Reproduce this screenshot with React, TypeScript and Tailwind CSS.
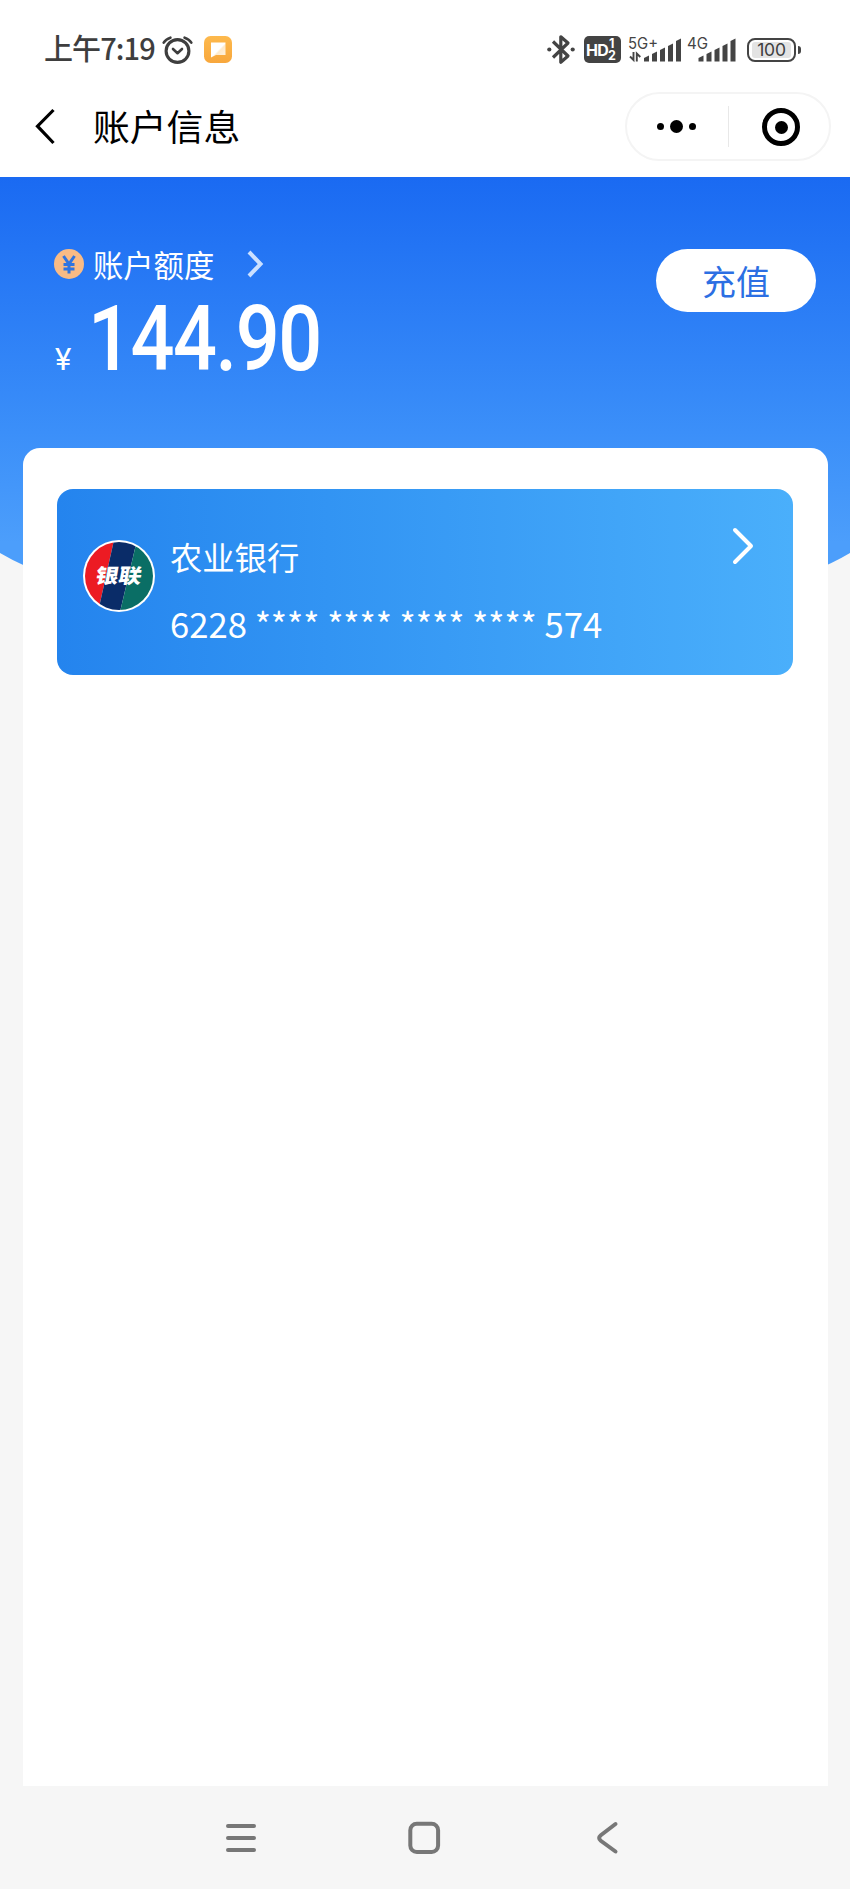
const signalBars = [
  { x: 0, h: 6 },
  { x: 8, h: 10 },
  { x: 16, h: 14 },
  { x: 24, h: 18 },
  { x: 32, h: 23 },
]

function Bars({ x }: { x: number }) {
  return (
    <g transform={`translate(${x} 0)`}>
      {signalBars.map((bar) => (
        <path
          key={bar.x}
          d={`M${bar.x} 25.5 V${28 - bar.h} L${bar.x + 5} ${25.5 - bar.h} V25.5 Z`}
          fill="#444"
        />
      ))}
    </g>
  )
}

function StatusBar() {
  return (
    <div className="flex h-[76px] items-center justify-between pt-[23px] pl-[44px] pr-[49px] text-[#3e3e3e]">
      <div className="flex items-center">
        <span className="w-[113px] whitespace-nowrap text-[29px] leading-none font-medium tracking-[-0.9px] -mt-1">
          上午7:19
        </span>
        {/* Alarm */}
        <svg className="ml-[5px]" width="31" height="28" viewBox="0 0 31 28" fill="none" stroke="#3e3e3e" strokeLinecap="round">
          <circle cx="15.5" cy="15" r="11.4" strokeWidth="3.1" />
          <path d="M11 13l4.5 4.2 4.5-4.2" strokeWidth="2.6" strokeLinejoin="round" />
          <path d="M1.7 6.6Q3.8 3.1 8.4 1.7M29.3 6.6Q27.2 3.1 22.6 1.7" strokeWidth="2.6" />
        </svg>
        {/* App notification */}
        <svg className="ml-[11px]" width="28" height="27" viewBox="0 0 28 27">
          <defs>
            <linearGradient id="note" x1="0" y1="0" x2="0" y2="1">
              <stop offset="0" stopColor="#fdb94d" />
              <stop offset="1" stopColor="#f8a73c" />
            </linearGradient>
            <linearGradient id="bubble" x1="0" y1="0" x2="1" y2="1">
              <stop offset="0.5" stopColor="#fff" />
              <stop offset="0.58" stopColor="#feeacb" />
              <stop offset="1" stopColor="#fff3e2" />
            </linearGradient>
          </defs>
          <rect width="28" height="27" rx="6.5" fill="url(#note)" />
          <path d="M7 6.500h14.500v12.500h-9.500l-5 2.500z" fill="url(#bubble)" />
        </svg>
      </div>

      <div className="flex items-center">
        {/* Bluetooth */}
        <svg width="28" height="31" viewBox="0 0 28 31" fill="none" stroke="#444" strokeWidth="3.2">
          <path d="M6 7.500l15 14.500-7.200 6.200V2.800l7.200 6.200-15 14.500" strokeLinejoin="round" />
          <circle cx="2.300" cy="15.500" r="2.100" fill="#444" stroke="none" />
          <circle cx="25.700" cy="15.500" r="2.100" fill="#444" stroke="none" />
        </svg>
        <div className="ml-[9px] flex h-[27px] w-[37px] items-center rounded-[5px] bg-[#434343] pl-[2px] font-['Inter','Noto_Sans_CJK_SC',sans-serif] font-bold text-white">
          <span className="text-[16px] leading-none tracking-[-0.7px]">HD</span>
          <span className="flex flex-col text-[12.500px] leading-[11.500px]">
            <span className="pl-px">1</span>
            <span>2</span>
          </span>
        </div>
        <svg className="ml-[7px]" width="110" height="38" viewBox="0 -5 110 38">
          <g fill="#444" fontFamily="Inter, 'Noto Sans', sans-serif" fontSize="15.500">
            <text x="0" y="12.500" textLength="30" lengthAdjust="spacingAndGlyphs">5G+</text>
            <text x="59" y="12.500" textLength="21" lengthAdjust="spacingAndGlyphs">4G</text>
          </g>
          <path d="M5.500 16v8l-3.500-3.500M8.800 25.500v-8l3.500 3.500" fill="none" stroke="#444" strokeWidth="1.900" />
          <Bars x={16} />
          <Bars x={70.5} />
        </svg>
        <div className="ml-[9px] flex items-center">
          <div className="flex h-[24px] w-[49px] items-center justify-center rounded-[8px] border-[2.500px] border-[#444]">
            <div className="flex h-[16px] w-[39px] items-center justify-center rounded-[3px] bg-[#e3e3e3] font-['Inter','Noto_Sans',sans-serif] text-[17.500px] leading-none tracking-[-0.2px]">
              100
            </div>
          </div>
          <div className="ml-[2px] h-[8px] w-[3px] rounded-r-full bg-[#444]" />
        </div>
      </div>
    </div>
  )
}

function TitleBar() {
  return (
    <div className="flex h-[101px] items-center pl-[35px] pr-[19px]">
      <svg width="21" height="37" viewBox="0 0 21 37" fill="none" stroke="#000" strokeWidth="3.200">
        <path d="M18.500 2L2.500 18.200 18.500 35" />
      </svg>
      <h1 className="ml-[37px] -mt-[3px] text-[36.800px] leading-none text-black">账户信息</h1>
      <div className="ml-auto flex h-[69px] w-[206px] items-center rounded-full border-2 border-[#f4f4f4]">
        <div className="flex w-[101px] items-center justify-center gap-[6px] pr-[2px]">
          <span className="size-[7px] rounded-full bg-black" />
          <span className="size-[13px] rounded-full bg-black" />
          <span className="size-[7px] rounded-full bg-black" />
        </div>
        <div className="h-[41px] w-px bg-[#e8e8e8]" />
        <div className="flex flex-1 items-center justify-center pl-[4px] pt-px">
          <div className="flex size-[38px] items-center justify-center rounded-full border-[5px] border-black">
            <span className="size-[13px] rounded-full bg-black" />
          </div>
        </div>
      </div>
    </div>
  )
}

function UnionPayLogo() {
  return (
    <svg width="72" height="72" viewBox="0 0 72 72">
      <defs>
        <clipPath id="disc">
          <circle cx="36" cy="36" r="34" />
        </clipPath>
      </defs>
      <circle cx="36" cy="36" r="36" fill="#fff" />
      <g clipPath="url(#disc)">
        <path d="M0 0h31L15 72H0z" fill="#ec1b23" />
        <path d="M31 0h23L37 72H15z" fill="#0a2c68" />
        <path d="M54 0h18v72H37z" fill="#0a6e65" />
      </g>
      <text
        x="19"
        y="43"
        transform="skewX(-10)"
        fontFamily="'Noto Sans CJK SC', sans-serif"
        fontSize="20"
        fontWeight="900"
        textLength="46"
        lengthAdjust="spacingAndGlyphs"
        fill="#fff"
      >
        银联
      </text>
    </svg>
  )
}

function BankCard() {
  return (
    <div className="flex h-[186px] rounded-[16px] bg-gradient-to-r from-[#2484ee] to-[#4aaffb] pl-[26px] pr-[38px] text-white">
      <div className="pt-[51px]">
        <UnionPayLogo />
      </div>
      <div className="ml-[15px] pt-[49px]">
        <div className="text-[32.300px] leading-[36px]">农业银行</div>
        <div className="mt-[29px] whitespace-nowrap text-[34.650px] leading-[40px]">
          6228 **** **** **** **** 574
        </div>
      </div>
      <svg className="mt-[38px] ml-auto" width="24" height="38" viewBox="0 0 24 38" fill="none" stroke="#fff" strokeWidth="4" strokeLinecap="round" strokeLinejoin="round">
        <path d="M4 3l16 16L4 35" />
      </svg>
    </div>
  )
}

function Balance() {
  return (
    <div className="flex h-[271px] justify-between pl-[54px] pr-[34px] pt-[71px] text-white">
      <div>
        <div className="flex h-[32px] items-center">
          <svg width="30" height="30" viewBox="0 0 30 30">
            <circle cx="15" cy="15" r="15" fill="#f9bb85" />
            <path d="M9.500 7l5.500 8 5.500-8M15 15v9.500M9.500 15.500h11M9.500 20h11" fill="none" stroke="#2e74e0" strokeWidth="3" />
          </svg>
          <span className="ml-[9px] -mt-px text-[30.300px] leading-[32px]">账户额度</span>
          <svg className="ml-[33px]" width="18" height="28" viewBox="0 0 18 28" fill="none" stroke="#cbe0ff" strokeWidth="4">
            <path d="M2 2l11.500 12L2 26" />
          </svg>
        </div>
        <div className="mt-[14px] flex items-baseline">
          <span className="w-[34px] pl-px font-['Roboto','Noto_Sans_CJK_SC',sans-serif] text-[31px] leading-none">¥</span>
          <span className="origin-left scale-x-[0.86] font-['Roboto',sans-serif] text-[90px] leading-[92px] font-medium tracking-[-1.700px]">
            144.90
          </span>
        </div>
      </div>
      <button className="mt-px h-[63px] w-[160px] rounded-full bg-white text-[34px] leading-none text-[#2c6fe3]">
        充值
      </button>
    </div>
  )
}

function NavBar() {
  return (
    <div className="flex h-[103px] bg-[#f6f6f6] pt-[34px] pl-[225px]">
      <svg width="32" height="36" viewBox="0 0 32 36" stroke="#777" strokeWidth="4" strokeLinecap="round">
        <path d="M3 6h26M3 18h26M3 30h26" />
      </svg>
      <svg className="ml-[150px]" width="34" height="36" viewBox="0 0 34 36" fill="none" stroke="#777" strokeWidth="4">
        <rect x="3.300" y="3.800" width="27.800" height="28.200" rx="6.500" />
      </svg>
      <svg className="ml-[156px]" width="22" height="36" viewBox="0 0 22 36" fill="none" stroke="#777" strokeWidth="4" strokeLinecap="round">
        <path d="M18.500 4L3.800 15.200Q0.500 18 3.800 20.800L18.500 31.500" />
      </svg>
    </div>
  )
}

export default function App() {
  return (
    <div className="flex h-[1889px] w-[850px] flex-col overflow-hidden bg-white font-['Noto_Sans_CJK_SC',sans-serif]">
      <StatusBar />
      <TitleBar />
      <main className="relative isolate flex flex-1 flex-col bg-[#f6f6f6]">
        {/* Curved blue backdrop */}
        <svg className="absolute inset-x-0 top-0 -z-10" width="850" height="450" viewBox="0 0 850 450">
          <defs>
            <linearGradient id="sky" x1="0" y1="0" x2="0" y2="1">
              <stop offset="0" stopColor="#1a6af2" />
              <stop offset="0.600" stopColor="#3b8ff9" />
              <stop offset="0.860" stopColor="#4c9efb" />
            </linearGradient>
          </defs>
          <path d="M0 0h850v376Q800 406 700 425H150Q50 406 0 376z" fill="url(#sky)" />
        </svg>
        <Balance />
        <div className="mr-[22px] ml-[23px] flex-1 rounded-t-[17px] bg-white pt-[41px] pr-[35px] pl-[34px]">
          <BankCard />
        </div>
      </main>
      <NavBar />
    </div>
  )
}
